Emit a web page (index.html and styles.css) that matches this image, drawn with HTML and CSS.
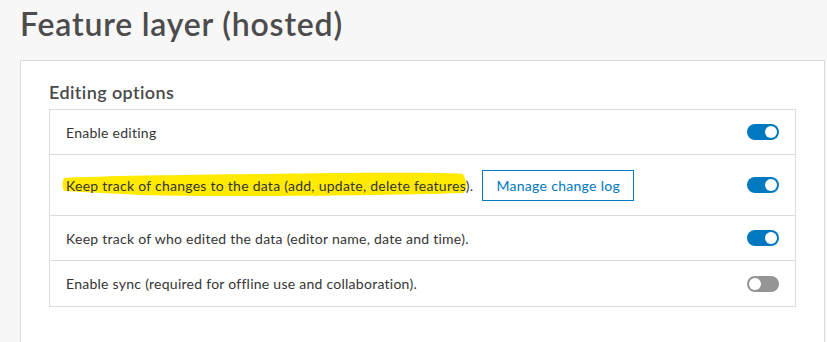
FILE: index.html
```html
<!DOCTYPE html>
<html lang="en">
<head>
  <meta charset="UTF-8" />
  <title>Feature layer (hosted)</title>
  <link rel="stylesheet" href="styles.css">
</head>
<body>

<h1 class="page-title">Feature layer (hosted)</h1>

<div class="card">
  <h2 class="card-title">Editing options</h2>

  <div class="options">
    <div class="option">
      <span class="label">Enable editing</span>
      <span class="toggle on"></span>
    </div>

    <div class="option tall">
      <span class="label marked">
        <svg class="marker" width="408" height="26" viewBox="0 0 408 26">
          <path d="M3,7 C40,5 120,4 200,3 S380,1 402,3 Q408,13 403,22 C300,25 160,26 80,24 L3,20 Q0,13 3,7 Z" fill="#ffea00"/>
        </svg>
        Keep track of changes to the data (add, update, delete features).
      </span>
      <button class="btn-outline">Manage change log</button>
      <span class="toggle on"></span>
    </div>

    <div class="option">
      <span class="label">Keep track of who edited the data (editor name, date and time).</span>
      <span class="toggle on"></span>
    </div>

    <div class="option last">
      <span class="label">Enable sync (required for offline use and collaboration).</span>
      <span class="toggle"></span>
    </div>
  </div>
</div>

</body>
</html>
```

FILE: styles.css
```css
* {
  margin: 0; padding: 0; box-sizing: border-box;
}

body {
  background: #f7f7f7;
  color: #4a4a4a;
  font-family: 'Lato', 'Noto Sans', sans-serif;
  padding: 2px 2px 0 20px;
  overflow: hidden;
}

.page-title {
  font-size: 32px;
  font-weight: 600;
  letter-spacing: 0.8px;
  line-height: 44px;
  color: #4c4c4c;
  margin-bottom: 14px;
}

.card {
  background: #fff;
  border: 1px solid #dcdcdc;
  width: 805px;
  padding: 20px 28px 60px 28px;
}

.card-title {
  font-size: 18px;
  font-weight: 600;
  letter-spacing: 0.4px;
  line-height: 22px;
  color: #4a4a4a;
  margin-bottom: 6px;
}

.options {
  border: 1px solid #dcdcdc;
}

.option {
  display: flex;
  align-items: center;
  height: 45px;
  padding: 0 16px;
  border-top: 1px solid #dcdcdc;
  font-size: 14px;
  letter-spacing: 0.26px;
  color: #353535;
  isolation: isolate;
}

.option:first-child {
  border-top: none;
  height: 44px;
}

.option.tall {
  height: 61px;
}

.option.last {
  height: 46px;
}

.label {
  flex: none;
}

.marked {
  position: relative;
}

.marker {
  position: absolute;
  left: -5px;
  top: -6px;
  z-index: -1;
}

.btn-outline {
  margin-left: 9px;
  width: 152px;
  height: 31px;
  border: 1px solid #0079c1;
  background: #fff;
  color: #0079c1;
  font-family: inherit;
  font-size: 14px;
  letter-spacing: 0.3px;
}

.toggle {
  margin-left: auto;
  position: relative;
  width: 32px;
  height: 16px;
  border-radius: 8px;
  background: #959595;
}

.toggle::after {
  content: "";
  position: absolute;
  top: 2px;
  left: 2px;
  width: 12px;
  height: 12px;
  border-radius: 50%;
  background: #fff;
}

.toggle.on {
  background: #0079c1;
}

.toggle.on::after {
  left: 18px;
}
```
